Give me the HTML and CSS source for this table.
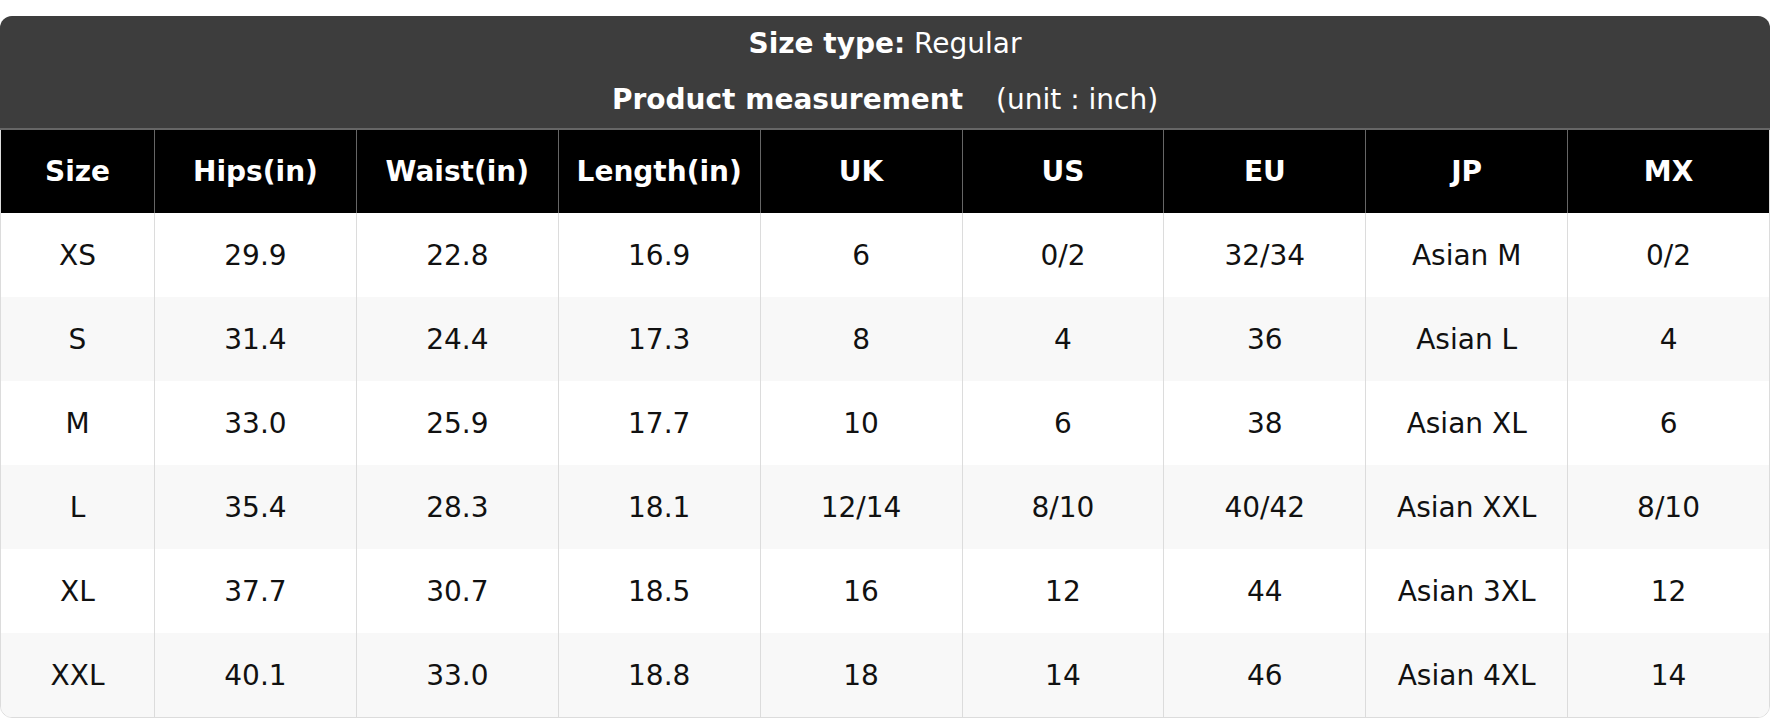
FILE: index.html
```html
<!DOCTYPE html>
<html lang="en">
<head>
<meta charset="utf-8">
<title>Size chart</title>
<link rel="stylesheet" href="styles.css">
</head>
<body>
<div class="card">
  <div class="head">
    <div class="head-line"><b>Size type:</b> Regular</div>
    <div class="head-line"><b>Product measurement</b> <span class="unit">(unit : inch)</span></div>
  </div>
  <table class="chart">
    <colgroup><col class="c-size"><col><col><col><col><col><col><col><col></colgroup>
    <thead>
      <tr><th>Size</th><th>Hips(in)</th><th>Waist(in)</th><th>Length(in)</th><th>UK</th><th>US</th><th>EU</th><th>JP</th><th>MX</th></tr>
    </thead>
    <tbody>
      <tr><td>XS</td><td>29.9</td><td>22.8</td><td>16.9</td><td>6</td><td>0/2</td><td>32/34</td><td>Asian M</td><td>0/2</td></tr>
      <tr><td>S</td><td>31.4</td><td>24.4</td><td>17.3</td><td>8</td><td>4</td><td>36</td><td>Asian L</td><td>4</td></tr>
      <tr><td>M</td><td>33.0</td><td>25.9</td><td>17.7</td><td>10</td><td>6</td><td>38</td><td>Asian XL</td><td>6</td></tr>
      <tr><td>L</td><td>35.4</td><td>28.3</td><td>18.1</td><td>12/14</td><td>8/10</td><td>40/42</td><td>Asian XXL</td><td>8/10</td></tr>
      <tr><td>XL</td><td>37.7</td><td>30.7</td><td>18.5</td><td>16</td><td>12</td><td>44</td><td>Asian 3XL</td><td>12</td></tr>
      <tr><td>XXL</td><td>40.1</td><td>33.0</td><td>18.8</td><td>18</td><td>14</td><td>46</td><td>Asian 4XL</td><td>14</td></tr>
    </tbody>
  </table>
</div>
</body>
</html>
```
FILE: styles.css
```css
html, body {
  margin: 0;
  padding: 0;
  background: #fff;
}
body {
  padding-top: 16px;
  font-family: "DejaVu Sans", "Liberation Sans", sans-serif;
  font-size: 28px;
  color: #111;
}
.card {
  border: 1px solid #dcdcdc;
  border-radius: 12px;
}
.head {
  margin: -1px -1px 0;
  background: #3d3d3d;
  color: #fff;
  text-align: center;
  border-radius: 12px 12px 0 0;
  border-bottom: 2px solid #666;
}
.head-line {
  height: 56px;
  line-height: 56px;
}
.head-line b {
  font-weight: bold;
}
.unit {
  margin-left: 24px;
}
.chart {
  width: 100%;
  table-layout: fixed;
  border-collapse: separate;
  border-spacing: 0;
}
.c-size {
  width: 153px;
}
.chart th {
  height: 83px;
  padding: 0;
  background: #000;
  color: #fff;
  font-weight: bold;
  text-align: center;
  vertical-align: middle;
}
.chart th + th {
  border-left: 1px solid #666;
}
.chart td {
  height: 84px;
  padding: 0;
  text-align: center;
  vertical-align: middle;
  background: #fff;
}
.chart td + td {
  border-left: 1px solid #dcdcdc;
}
.chart tbody tr:nth-child(even) td {
  background: #f8f8f8;
}
.chart tbody tr:last-child td:first-child {
  border-bottom-left-radius: 11px;
}
.chart tbody tr:last-child td:last-child {
  border-bottom-right-radius: 11px;
}
```
